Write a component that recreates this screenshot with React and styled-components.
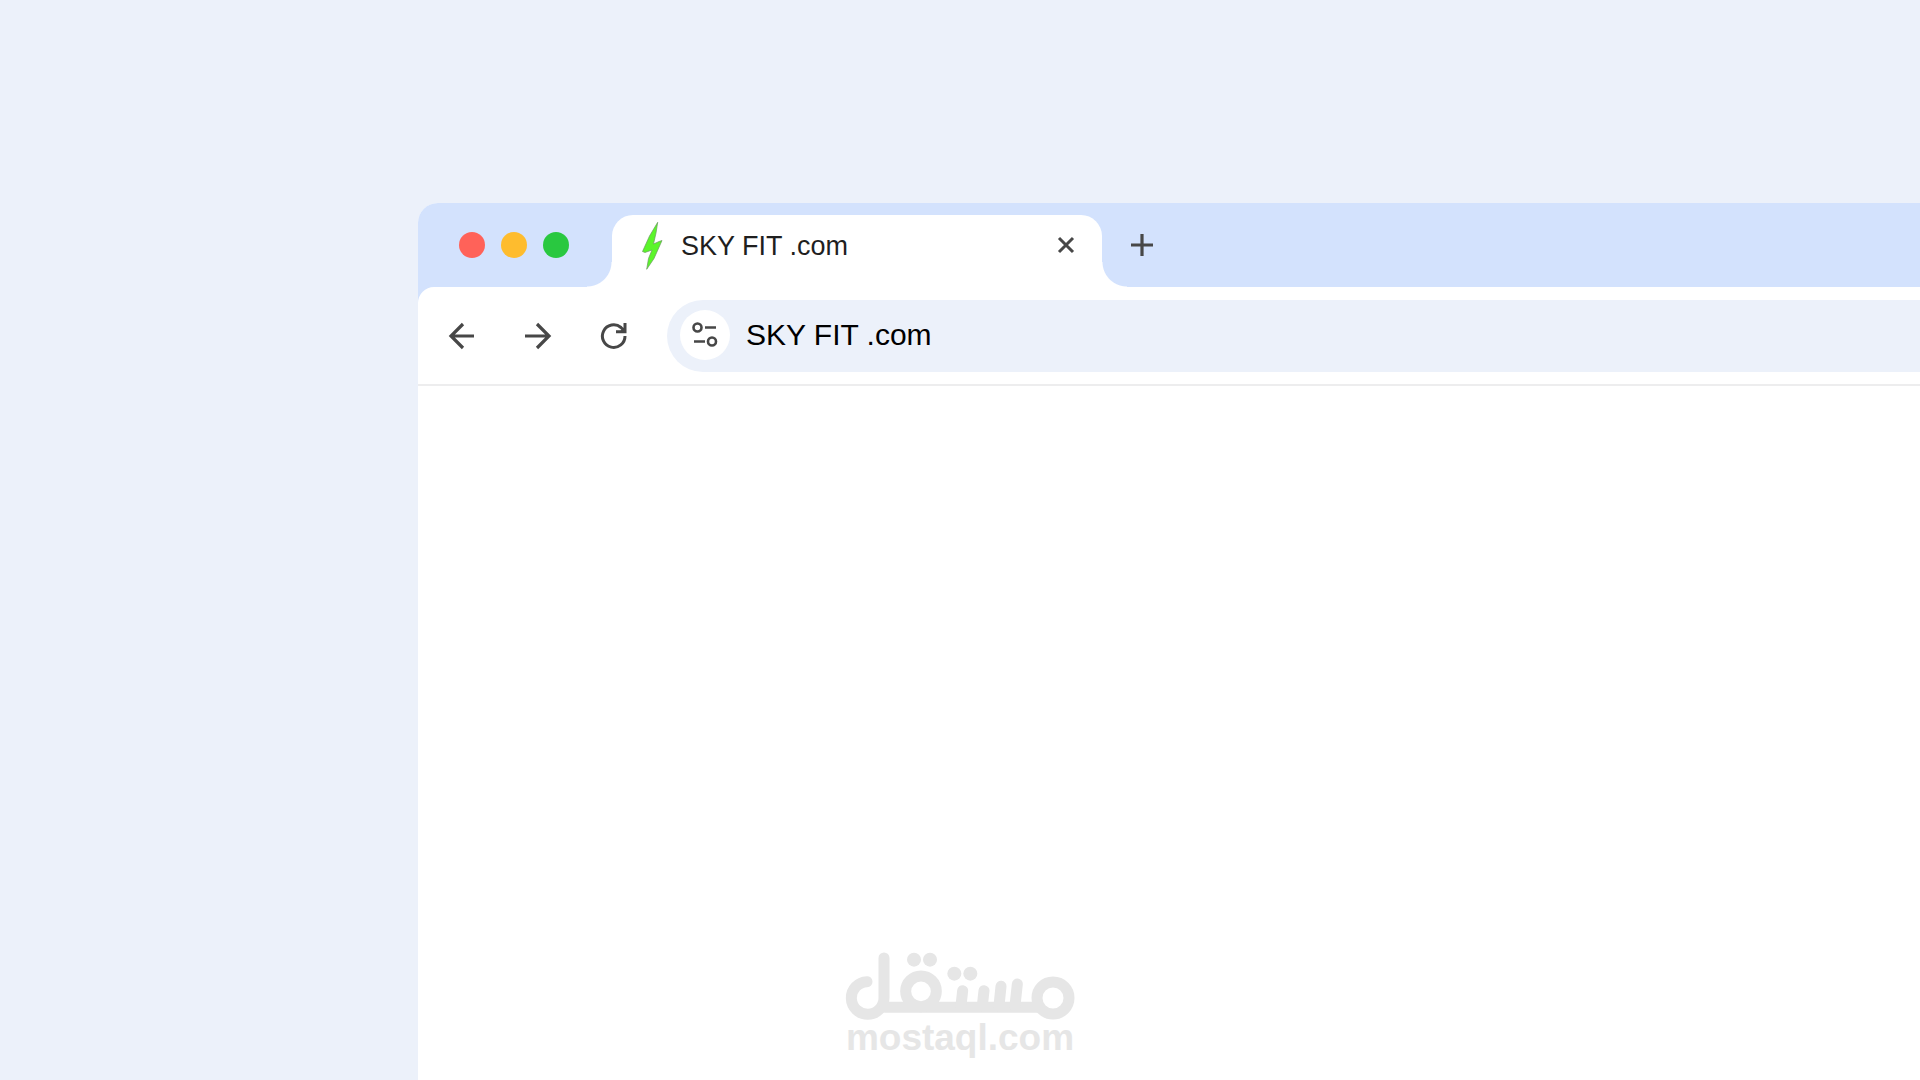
import React from "react";
import styled, { createGlobalStyle, css } from "styled-components";

const GlobalStyle = createGlobalStyle`
  *, *::before, *::after { box-sizing: border-box; }
  body {
    margin: 0;
    background: #ecf1fa;
    font-family: "Liberation Sans", Arial, sans-serif;
    overflow: hidden;
  }
`;

const Desktop = styled.div`
  position: relative;
  display: flex;
  min-height: 100vh;
  padding: 203px 0 0 418px;
`;

const BrowserWindow = styled.main`
  flex: 1;
  display: flex;
  flex-direction: column;
  min-width: 0;
  background: #fff;
  border-top-left-radius: 20px;
  overflow: hidden;
`;

const TabStrip = styled.header`
  display: flex;
  height: 84px;
  padding: 12px 0 0 41px;
  background: #d3e2fd;
`;

const WindowControls = styled.div`
  display: flex;
  gap: 16px;
  padding-top: 17px;
  width: 153px;
`;

const WindowDot = styled.button`
  width: 26px;
  height: 26px;
  padding: 0;
  border: 0;
  border-radius: 50%;
  background: ${({ $color }) => $color};
`;

const flare = css`
  content: "";
  position: absolute;
  bottom: 0;
  width: 25px;
  height: 25px;
`;

const Tab = styled.div`
  position: relative;
  display: flex;
  align-items: center;
  width: 490px;
  padding: 0 23px 12px 26px;
  background: #fff;
  border-radius: 21px 21px 0 0;
  &::before {
    ${flare}
    right: 100%;
    background: radial-gradient(circle at 0 0, transparent 24px, #fff 25px);
  }
  &::after {
    ${flare}
    left: 100%;
    background: radial-gradient(circle at 100% 0, transparent 24px, #fff 25px);
  }
`;

const TabTitle = styled.span`
  flex: 1;
  margin-left: 15px;
  padding-top: 2px;
  font-size: 27px;
  line-height: 32px;
  color: #1f1f1f;
`;

const IconButton = styled.button`
  display: flex;
  align-items: center;
  justify-content: center;
  width: ${({ $size }) => $size}px;
  height: ${({ $size }) => $size}px;
  padding: 0;
  border: 0;
  border-radius: 50%;
  background: ${({ $fill }) => $fill || "transparent"};
  color: #474747;
  svg { overflow: visible; }
`;

const NewTab = styled.div`
  padding: 10px 0 0 20px;
`;

const ToolbarBack = styled.div`
  background: #d3e2fd;
`;

const Toolbar = styled.nav`
  display: flex;
  align-items: center;
  height: 99px;
  padding: 0 0 0 24px;
  background: #fff;
  border-bottom: 2px solid #ededee;
  border-top-left-radius: 16px;
`;

const NavButtons = styled.div`
  display: flex;
  gap: 36px;
`;

const AddressBar = styled.form`
  flex: 1;
  display: flex;
  align-items: center;
  height: 72px;
  margin-left: 33px;
  padding: 0 0 2px 13px;
  background: #ecf1fa;
  border-radius: 36px 0 0 36px;
`;

const AddressInput = styled.input`
  flex: 1;
  min-width: 0;
  height: 40px;
  margin-left: 16px;
  padding: 0;
  border: 0;
  outline: 0;
  background: transparent;
  font: 30px/40px "Liberation Sans", Arial, sans-serif;
  color: #000;
`;

const Watermark = styled.div`
  position: absolute;
  left: 0;
  right: 0;
  bottom: 25px;
  display: flex;
  flex-direction: column;
  align-items: center;
  color: #e6e6e6;
  pointer-events: none;
`;

const WatermarkText = styled.span`
  font-size: 37px;
  line-height: 34px;
  font-weight: 700;
`;

const Bolt = () => (
  <svg width="28" height="52" viewBox="0 0 28 52" aria-hidden="true">
    <path
      d="M19.7 3.3L11.5 17L4.5 32.5L7 33.5L14 31L10.5 39.5L8.7 50.3L16 39.5L24 21.5L21 22.5L15.5 25L18 14Z"
      fill="#5bf52a"
      stroke="#6b9a60"
      strokeWidth="0.7"
    />
  </svg>
);

const Stroke = ({ size, d, width = 3, solid }) => (
  <svg
    width={size}
    height={size}
    viewBox={`0 0 ${size} ${size}`}
    fill="none"
    stroke="currentColor"
    strokeWidth={width}
    aria-hidden="true"
  >
    <path d={d} />
    {solid && <path d={solid} fill="currentColor" stroke="none" />}
  </svg>
);

const SiteSettings = () => (
  <svg width="26" height="26" viewBox="0 0 26 26" fill="none" stroke="currentColor" strokeWidth="2.6" aria-hidden="true">
    <circle cx="5.5" cy="5.5" r="4" />
    <path d="M13 5.5H24M2 19.5H13" />
    <circle cx="20" cy="19.5" r="4" />
  </svg>
);

const MostaqlMark = () => (
  <svg
    width="230"
    height="69"
    viewBox="45 35 690 207"
    fill="none"
    stroke="currentColor"
    strokeWidth="33"
    strokeLinecap="round"
    role="img"
    aria-label="مستقل"
  >
    <path d="M111 124A49 49 0 1 0 162 173V53" />
    <path d="M166 201H620" />
    <circle cx="273" cy="153" r="46" />
    <circle cx="669" cy="173" r="48" />
    <path d="M398 151L393 196M462 151L457 196M513 138L507 196M562 131L555 196" />
    <g fill="currentColor" stroke="none">
      <circle cx="252" cy="58" r="21" />
      <circle cx="300" cy="58" r="21" />
      <circle cx="373" cy="100" r="21" />
      <circle cx="421" cy="100" r="21" />
    </g>
  </svg>
);

export default function App() {
  return (
    <>
      <GlobalStyle />
      <Desktop>
        <BrowserWindow>
          <TabStrip>
            <WindowControls>
              <WindowDot $color="#ff6259" aria-label="Close window" />
              <WindowDot $color="#febc2e" aria-label="Minimize window" />
              <WindowDot $color="#29c840" aria-label="Maximize window" />
            </WindowControls>
            <Tab>
              <Bolt />
              <TabTitle>SKY FIT .com</TabTitle>
              <IconButton $size={26} aria-label="Close tab">
                <Stroke size={16} d="M1 1L15 15M15 1L1 15" />
              </IconButton>
            </Tab>
            <NewTab>
              <IconButton $size={40} aria-label="New tab">
                <Stroke size={22} d="M11 0V22M0 11H22" width={3.2} />
              </IconButton>
            </NewTab>
          </TabStrip>
          <ToolbarBack>
            <Toolbar>
              <NavButtons>
                <IconButton $size={40} aria-label="Back">
                  <Stroke size={26} d="M25 13H2M14 1L2 13L14 25" width={3.2} />
                </IconButton>
                <IconButton $size={40} aria-label="Forward">
                  <Stroke size={26} d="M0 13H23M12 1L24 13L12 25" width={3.2} />
                </IconButton>
                <IconButton $size={40} aria-label="Reload">
                  <Stroke
                    size={26}
                    d="M24 13A11.3 11.3 0 1 1 20 4.5L24 8.5M24 0V8.7H15"
                    solid="M24 4V9H18Z"
                  />
                </IconButton>
              </NavButtons>
              <AddressBar>
                <IconButton $size={50} $fill="#fff" type="button" aria-label="Site information">
                  <SiteSettings />
                </IconButton>
                <AddressInput type="text" defaultValue="SKY FIT .com" aria-label="Address" />
              </AddressBar>
            </Toolbar>
          </ToolbarBack>
        </BrowserWindow>
        <Watermark>
          <MostaqlMark />
          <WatermarkText>mostaql.com</WatermarkText>
        </Watermark>
      </Desktop>
    </>
  );
}
